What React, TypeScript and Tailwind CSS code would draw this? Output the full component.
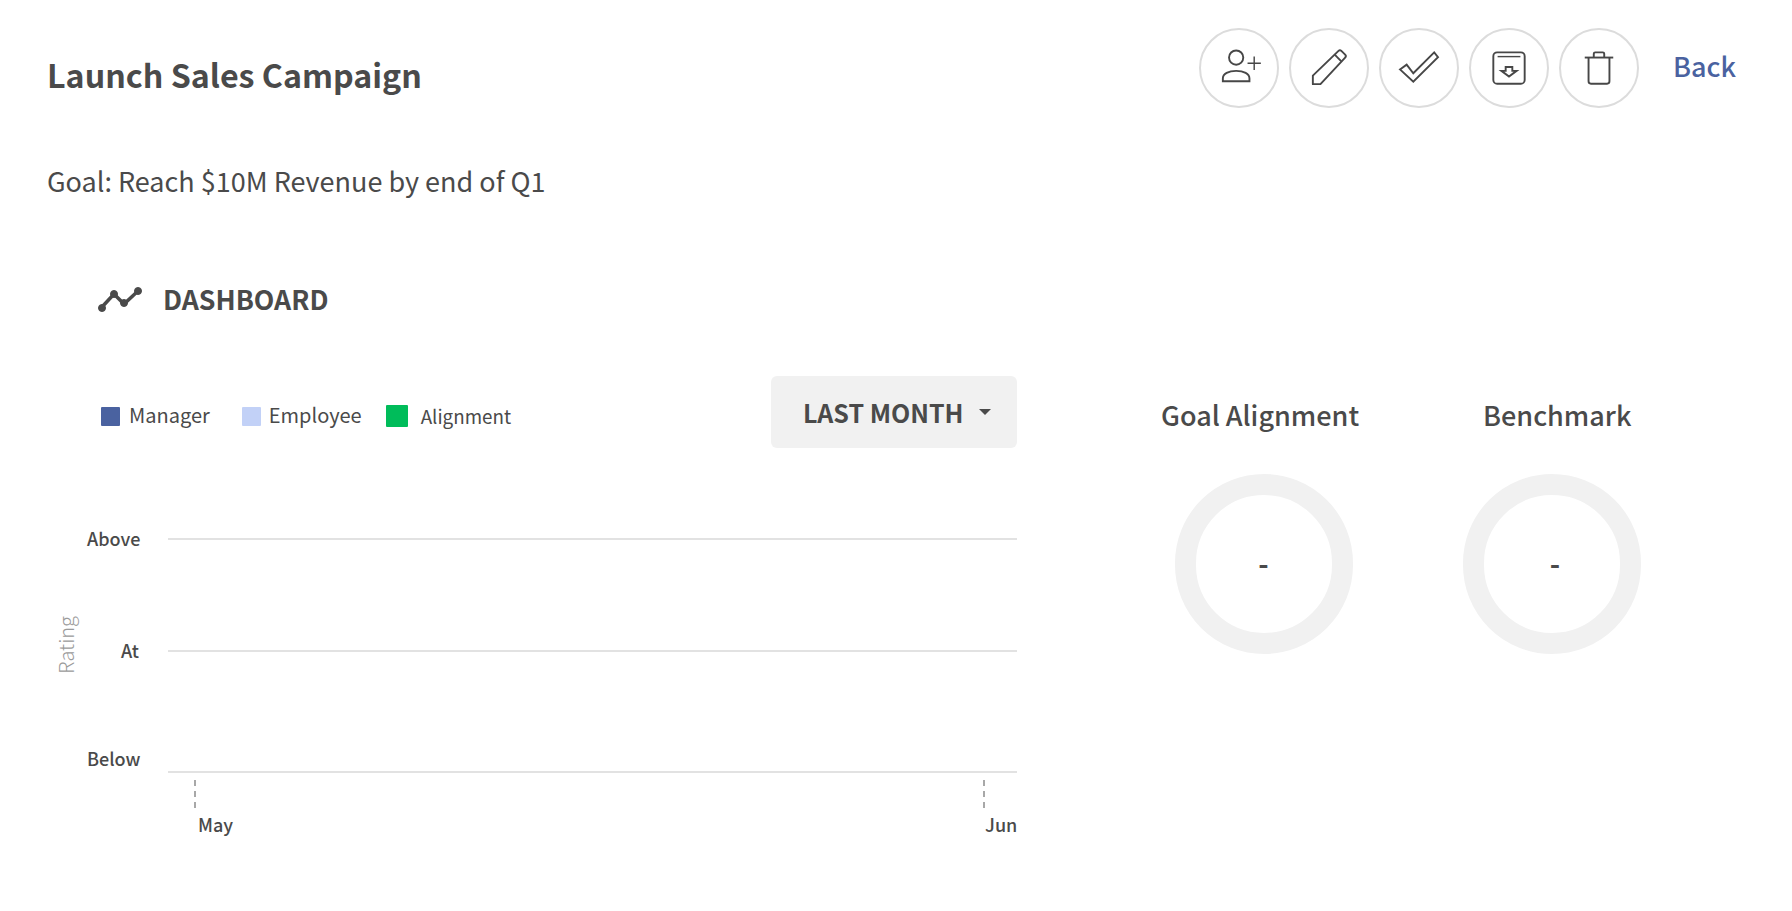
const font = { fontFamily: '"Noto Sans CJK SC", "Noto Sans", sans-serif' };

function PersonPlus() {
    return (
        <svg viewBox="0 0 80 80" className="w-full h-full" fill="none" stroke="#474747" strokeWidth="2">
            <circle cx="37" cy="29" r="7.500" />
            <path d="M23 54v-3c0-5 6-8 14-8s14 3 14 8v3z" />
            <path d="M56 28v14M49 35h14" strokeWidth="1.500" />
        </svg>
    );
}

function Pencil() {
    return (
        <svg viewBox="0 0 80 80" className="w-full h-full" fill="none" stroke="#474747" strokeWidth="2" strokeLinejoin="round">
            <path d="M23 57v-9l27-26c1-1 2-1 3 0l4 4c1 1 1 2 0 3L31 57z" />
            <path d="M46 26l7 7" />
        </svg>
    );
}

function DoubleCheck() {
    return (
        <svg viewBox="0 0 80 80" className="w-full h-full" fill="none" stroke="#474747" strokeWidth="2" strokeLinejoin="miter">
            <path d="M20 41.500l7-5 7 9 22-22 4 5-26 26z" />
        </svg>
    );
}

function ArchiveDown() {
    return (
        <svg viewBox="0 0 80 80" className="w-full h-full" fill="none" stroke="#474747" strokeWidth="2">
            <rect x="23.500" y="23.500" width="33" height="33" rx="4" />
            <path d="M28 28h24" strokeWidth="1.500" />
            <path d="M36.500 39h7v4h4.500l-8 6-8-6h4.500z" />
        </svg>
    );
}

function Trash() {
    return (
        <svg viewBox="0 0 80 80" className="w-full h-full" fill="none" stroke="#474747" strokeWidth="2">
            <path d="M25 29h30" />
            <path d="M34.500 29v-4c0-1 .5-1.500 1.500-1.500h8c1 0 1.500.5 1.500 1.500v4" />
            <path d="M29 29v25c0 1.500 1 2.500 2.500 2.500h17c1.500 0 2.500-1 2.500-2.500V29" />
        </svg>
    );
}

function TrendIcon() {
    return (
        <svg viewBox="0 0 46 28" className="w-[46px] h-[28px]" fill="#4a4a4a" stroke="#4a4a4a">
            <path d="M5 22L17 9l10 10L41 6" fill="none" strokeWidth="3.500" />
            <circle cx="5" cy="23" r="3.500" />
            <circle cx="17" cy="9" r="3.500" />
            <circle cx="27" cy="18" r="3.500" />
            <circle cx="41" cy="6" r="3.500" />
        </svg>
    );
}

const actions = [PersonPlus, Pencil, DoubleCheck, ArchiveDown, Trash];

function Ring({ label, className, ringClass, dashClass }: { label: string; className: string; ringClass: string; dashClass: string }) {
    return (
        <div className={className}>
            <div className="text-[27px] leading-[36px] font-medium whitespace-nowrap -mt-[1px]">{label}</div>
            <div className={`w-[178px] h-[180px] rounded-full border-[21px] border-[#f1f1f1] flex items-center justify-center mt-[41px] pb-[2px] text-[28px] font-bold ${ringClass}`}>
                <span className={dashClass}>-</span>
            </div>
        </div>
    );
}

function YLabel({ children }: { children: string }) {
    return <span className="w-[52px] text-right text-[18px] leading-[24px] font-medium -mt-[2px]">{children}</span>;
}

export default function App() {
    return (
        <div className="w-full min-h-[911px] bg-white text-[#4a4a4a] overflow-hidden" style={font}>
            {/* Header */}
            <div className="flex items-start justify-between pl-[47px] pr-[56px] pt-[28px]">
                <h1 className="text-[32.200px] leading-[44px] font-bold mt-[24px] whitespace-nowrap">Launch Sales Campaign</h1>
                <div className="flex items-center">
                    <div className="flex gap-[10px]">
                        {actions.map((Icon, i) => (
                            <button key={i} className="w-[80px] h-[80px] rounded-full border-2 border-[#dcdcdc] bg-white">
                                <Icon />
                            </button>
                        ))}
                    </div>
                    <a className="ml-[34px] -mt-[4px] text-[27px] leading-[36px] font-medium text-[#4a62a0]">Back</a>
                </div>
            </div>

            <p className="pl-[47px] mt-[53px] text-[27px] leading-[40px] font-normal whitespace-nowrap">
                Goal: Reach $10M Revenue by end of Q1
            </p>

            <div className="flex items-center gap-[20px] pl-[97px] mt-[80px]">
                <TrendIcon />
                <span className="text-[26.700px] leading-[36px] font-bold">DASHBOARD</span>
            </div>

            <div className="flex mt-[59px]">
                {/* Chart */}
                <div className="w-[1017px] shrink-0">
                    <div className="flex items-center justify-between pl-[101px]">
                        <div className="flex items-center text-[20px] leading-[28px] font-normal mt-[7px]">
                            <span className="w-[19px] h-[19px] rounded-[1px] bg-[#4a62a0] mt-[2px]" />
                            <span className="ml-[9px] -mt-[2px]">Manager</span>
                            <span className="w-[19px] h-[19px] rounded-[1px] bg-[#c2d1f7] ml-[32px] mt-[2px]" />
                            <span className="ml-[8px] -mt-[2px]">Employee</span>
                            <span className="w-[22px] h-[22px] rounded-[1px] bg-[#00bc5a] ml-[24px]" />
                            <span className="ml-[13px] text-[18.800px]">Alignment</span>
                        </div>
                        <button className="w-[246px] h-[72px] rounded-[6px] bg-[#f1f1f1] flex items-center pl-[32px]">
                            <span className="text-[25px] leading-[32px] font-bold">LAST MONTH</span>
                            <span className="ml-[15px] w-0 h-0 border-x-[6px] border-x-transparent border-t-[6px] border-t-[#4a4a4a]" />
                        </button>
                    </div>

                    <div className="flex mt-[79px]">
                        <div className="w-[42px] ml-[45px] flex items-start justify-center pt-[89px]">
                            <span className="[writing-mode:vertical-rl] rotate-180 text-[20px] leading-[24px] font-light text-[#9b9b9b]">Rating</span>
                        </div>
                        <div className="flex-1">
                            <div className="flex items-center h-[24px]">
                                <YLabel>Above</YLabel>
                                <div className="flex-1 h-[2px] bg-[#e2e2e2] ml-[29px]" />
                            </div>
                            <div className="flex items-center h-[24px] mt-[88px]">
                                <YLabel>At</YLabel>
                                <div className="flex-1 h-[2px] bg-[#e2e2e2] ml-[29px]" />
                            </div>
                            <div className="flex items-start h-[25px] mt-[85px]">
                                <YLabel>Below</YLabel>
                                <div className="flex-1 h-[2px] bg-[#e2e2e2] ml-[29px] mt-[23px]" />
                            </div>
                            <div className="flex justify-between pl-[107px]">
                                <div>
                                    <div className="h-[28px] w-0 border-l-2 border-dashed border-[#a8a8a8] mt-[7px]" />
                                    <div className="text-[18px] leading-[24px] font-medium mt-[4px] ml-[4px]">May</div>
                                </div>
                                <div className="w-[34px]">
                                    <div className="h-[28px] w-0 border-l-2 border-dashed border-[#a8a8a8] mt-[7px]" />
                                    <div className="text-[18px] leading-[24px] font-medium mt-[4px] ml-[2px]">Jun</div>
                                </div>
                            </div>
                        </div>
                    </div>
                </div>

                {/* Rings */}
                <div className="flex pl-[144px] pt-[22px]">
                    <Ring label="Goal Alignment" className="w-[322px] flex flex-col" ringClass="ml-[14px]" dashClass="-ml-[1px]" />
                    <Ring label="Benchmark" className="flex flex-col" ringClass="-ml-[20px]" dashClass="ml-[6px]" />
                </div>
            </div>
        </div>
    );
}
